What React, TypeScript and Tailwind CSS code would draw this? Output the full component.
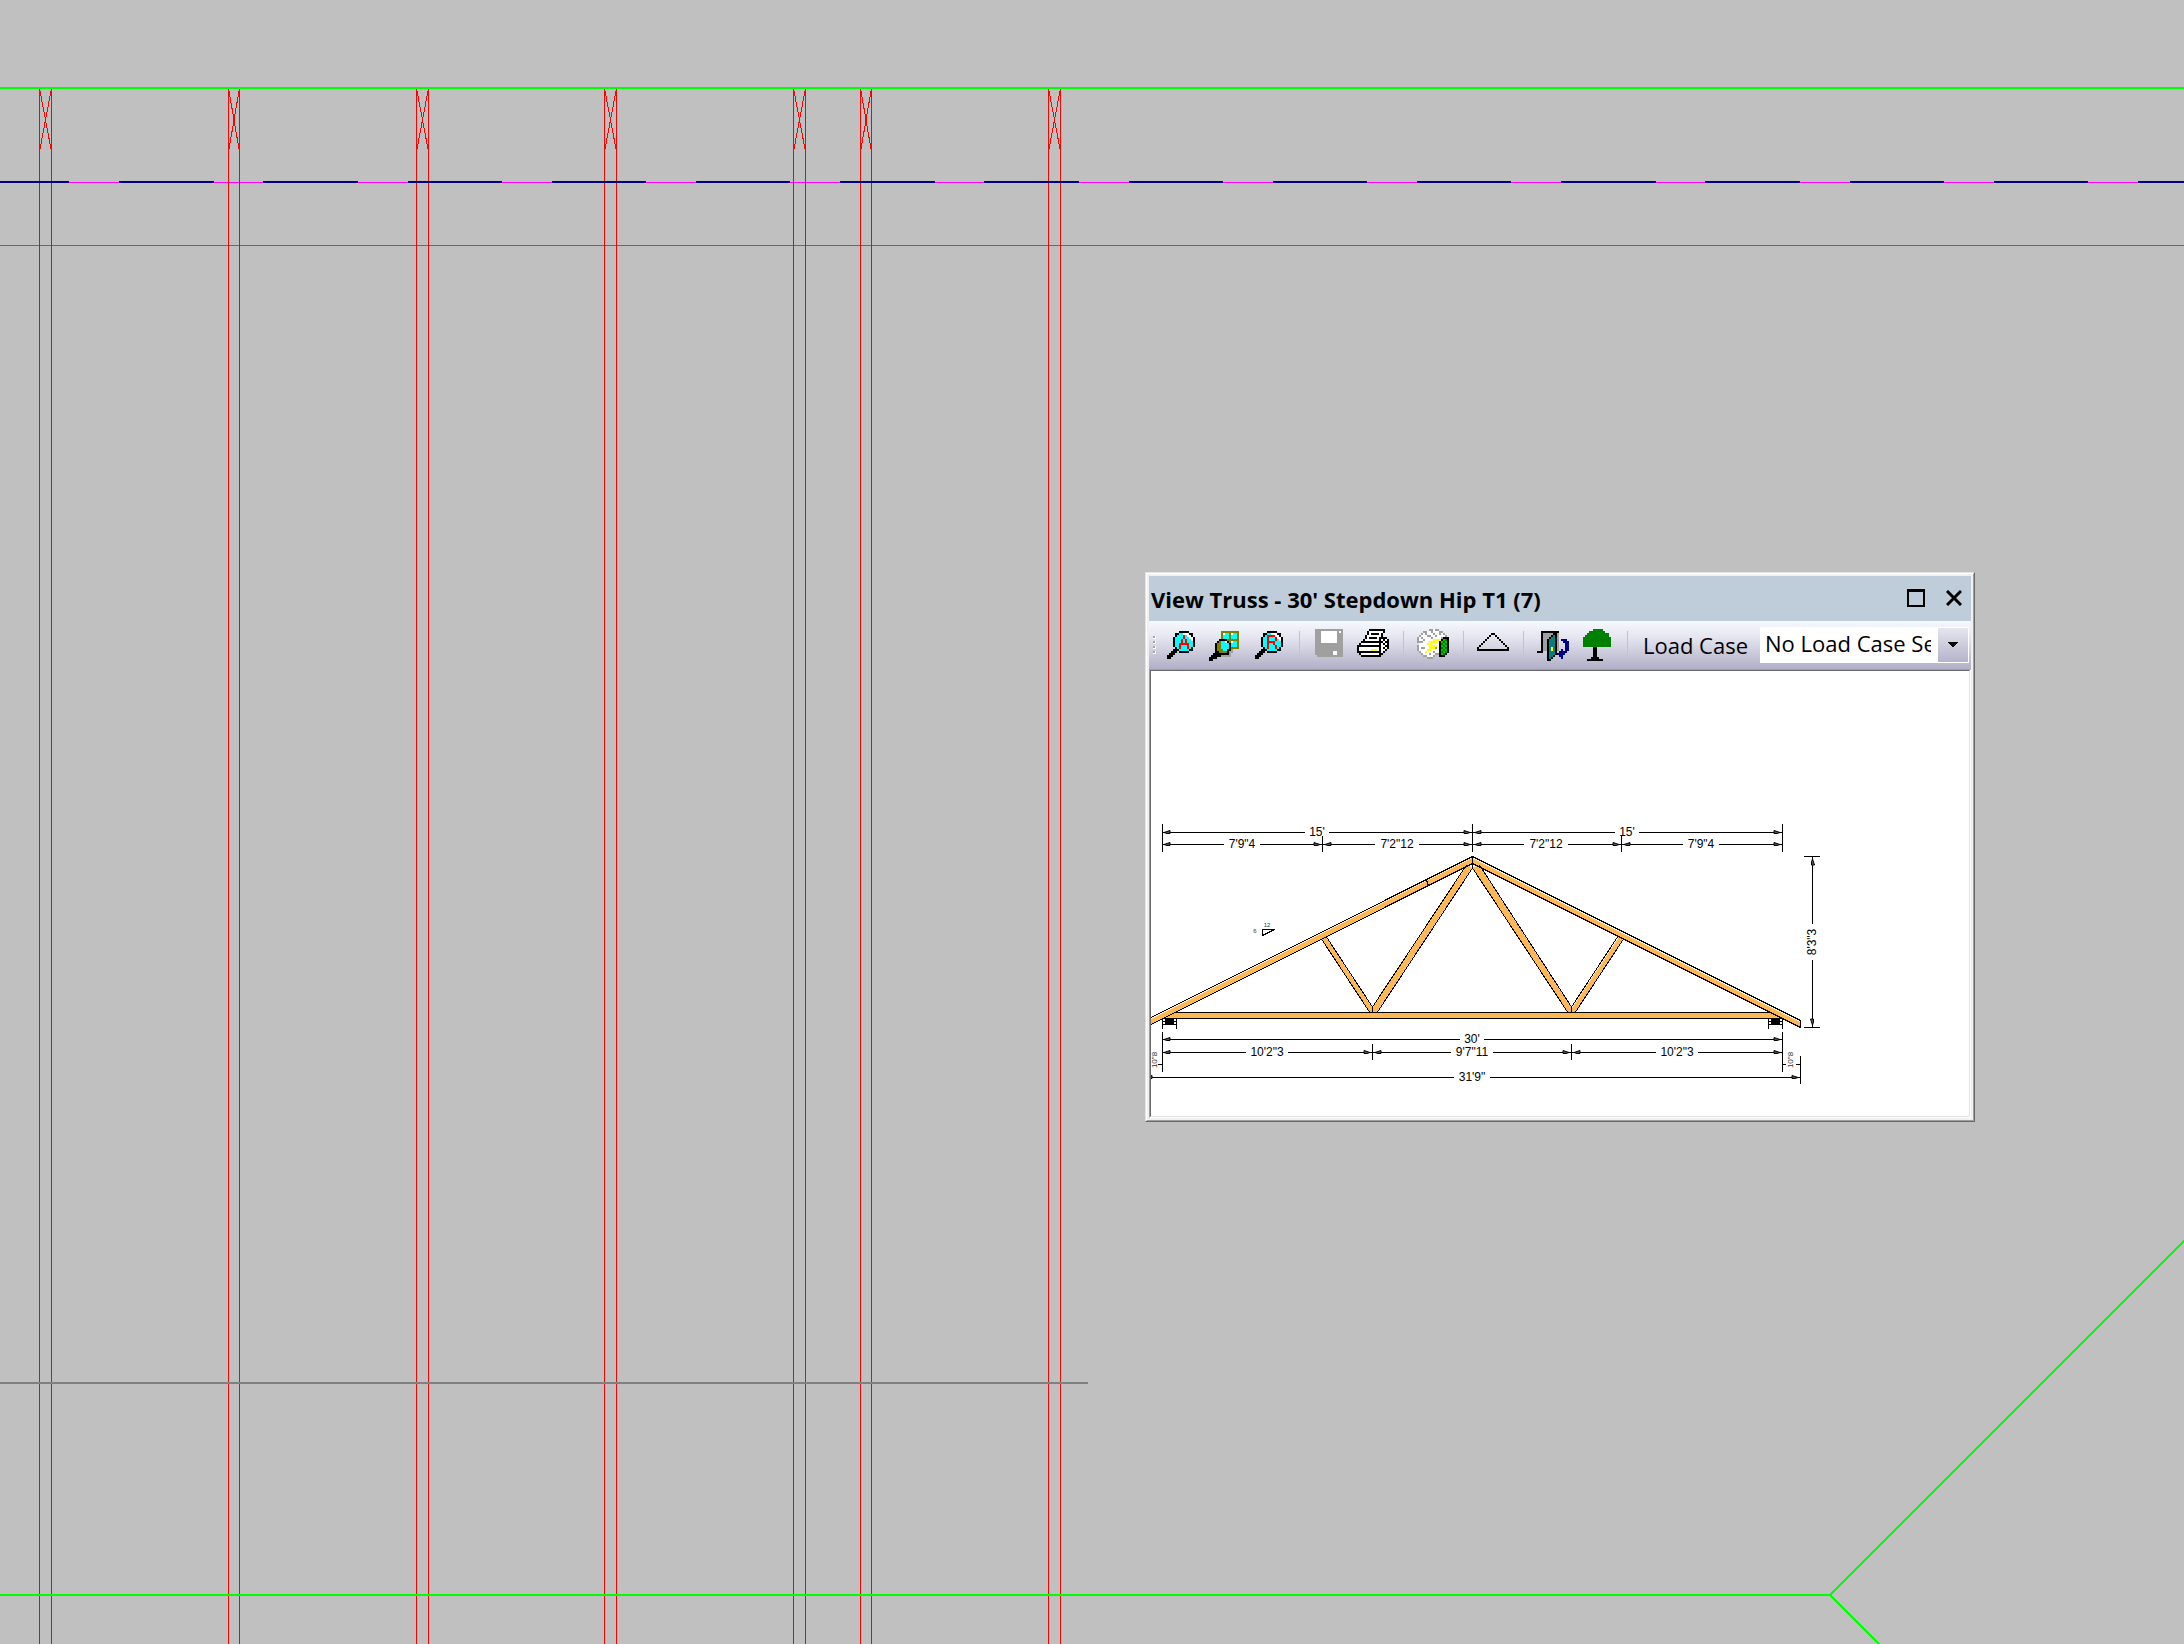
import { Fragment } from "react";

const palette: Record<string, string> = {
  "#": "#000000",
  w: "#ffffff",
  c: "#00ffff",
  r: "#ff0000",
  o: "#808000",
  g: "#a0a0a0",
  y: "#ffff00",
  G: "#008000",
  L: "#00c000",
  t: "#008080",
  n: "#000080",
};

const zoomAll = [
  "......#####...",
  "....##ccwww##.",
  "....#cccrcww#.",
  "...#ccccrccww#",
  "...#cccrcrccw#",
  "...#cccrcrccc#",
  "...#ccrrrrrcc#",
  "...#ccrcccrcc#",
  "....#crcccrc#.",
  "...###ccccc##.",
  "..###.#####...",
  ".###..........",
  "###...........",
  "##............",
];

const zoomWindow = [
  "......ooooooooo",
  "......owccowcco",
  "......occcoccco",
  "......occcoccco",
  ".....####oooooo",
  "....#occw#owcco",
  "...#oocccc#ccco",
  "...#oocccc#ccco",
  "...#oocccc#oooo",
  "...#ooocc##g...",
  "...##oooo#gg...",
  "..########g....",
  ".#####ggggg....",
  "####...........",
  "##.............",
];

const zoomRestore = [
  "......#####...",
  "....##ccwww##.",
  "....#crrrrww#.",
  "...#ccrcccrww#",
  "...#ccrcccrcw#",
  "...#ccrrrrccc#",
  "...#ccrccrccc#",
  "...#ccrcccrcc#",
  "....#crcccrc#.",
  "...###ccccc##.",
  "..###.#####...",
  ".###..........",
  "###...........",
  "##............",
];

const save = [
  "gggggggggggggg",
  "gggwwwwwwwwgwg",
  "gggwwwwwwwwggg",
  "gggwwwwwwwwggg",
  "gggwwwwwwwwggg",
  "gggwwwwwwwwggg",
  "gggwwwwwwwwggg",
  "gggggggggggggg",
  "gggggggggggggg",
  "gggggggggggggg",
  "gggggggggggggg",
  "gggggggggwwggg",
  "gggggggggwwggg",
  ".ggggggggggggg",
];

const print = [
  "......########..",
  ".....#wwwwwww#..",
  ".....#w####w#...",
  "....#wwwwwww#...",
  "....#w####w####.",
  "...#wwwwwww#w#w#",
  "..###########w##",
  ".#wwwwwwwww#w#w#",
  "############ww##",
  "#wwwwwwwwww#w#w#",
  "#wwwwwwyyyw#ww#.",
  "############w#..",
  ".#wwwwwwwww##...",
  "..##########....",
];

const analyze = [
  "......ggwgg.....",
  "...ggwwgwwwgg...",
  "..gwgwwwgwwgwg..",
  ".gwwwggwwgwwwwg.",
  "gwgwwwwgwwwwg###",
  "gwwgwwwwyyyy#LG#",
  "gggwwwyyyyw#LGL#",
  ".wwwwyywwww#GLG#",
  "gwwwwwyyyyw#LGL#",
  "gwggwwyyygw#GLG#",
  "gwwwwyywwww#LGL#",
  ".gwwywwwgww#GLG#",
  "..gwwwgwwgg#LG#.",
  "...ggwwwg..###..",
  ".....ggg........",
];

const pitch = [
  ".......##.......",
  "......#..#......",
  ".....#....#.....",
  "....#......#....",
  "...#........#...",
  "..#..........#..",
  ".#............#.",
  "#..............#",
  "################",
];

const exit = [
  "..#########.....",
  "..#ggggg##g.....",
  "..#gggg#t#g.....",
  "..#ggg#tt#g.....",
  "..#gg#ttt#g.nnn.",
  "..#gg#ttt#g..nnn",
  "..#gg#ttt#g...nn",
  "..#gg#ttt#g...nn",
  "..#gg#tyt#g...nn",
  "..#gg#tyt#g.n.nn",
  "###..#ttt#.nnnn.",
  ".....#ttt#nnnn..",
  ".....#tt#..nn...",
  ".....#t#....n...",
  ".....##.........",
];

const tree = [
  ".....GGGGG....",
  "...GGGGGGGG...",
  "..GGGGGGGGGGG.",
  ".GGGGGGGGGGGG.",
  "GGGGGGGGGGGGGG",
  "GGGGGGGGGGGGGG",
  "GGGGGGGGGGGGGG",
  "GGGGGGGGGGGGGG",
  "GGGGGGGGGGGGGG",
  ".....##.......",
  ".....##.......",
  ".....##.......",
  ".....##.......",
  ".....##.......",
  "....####......",
  "..########....",
];

interface SpriteProps {
  rows: string[];
  x?: number;
  y?: number;
}

// 16x16 toolbar bitmap, one rect per coloured cell
function Sprite({ rows, x = 0, y = 0 }: SpriteProps) {
  return (
    <svg viewBox="0 0 16 16" className="w-8 h-8" shapeRendering="crispEdges" aria-hidden="true">
      {rows.map((row, r) =>
        row.split("").map((cell, c) =>
          cell === "." ? null : (
            <rect key={`${r}-${c}`} x={x + c} y={y + r} width="1" height="1" fill={palette[cell]} />
          ),
        ),
      )}
    </svg>
  );
}

const toolGroups = [
  [
    { label: "Zoom all", rows: zoomAll, x: 1, y: 1 },
    { label: "Zoom window", rows: zoomWindow, x: 0, y: 1 },
    { label: "Zoom restore", rows: zoomRestore, x: 1, y: 1 },
  ],
  [
    { label: "Save", rows: save, x: 1, y: 0 },
    { label: "Print", rows: print, x: 0, y: 0 },
  ],
  [{ label: "Analyze", rows: analyze, x: 0, y: 0 }],
  [{ label: "Truss", rows: pitch, x: 0, y: 2 }],
  [
    { label: "Exit", rows: exit, x: 0, y: 1 },
    { label: "Tree", rows: tree, x: 1, y: 0 },
  ],
];

function Toolbar() {
  return (
    <div className="flex items-center h-12 pl-1 bg-linear-to-b from-[#f6f9fe] via-[#e4e5ef] via-35% to-[#b1afc7]">
      <div className="flex flex-col gap-0.5 w-1.5">
        {[0, 1, 2, 3].map((dot) => (
          <span key={dot} className="w-[3px] h-[3px] bg-[#a5a5ad] border-r border-b border-white" />
        ))}
      </div>
      {toolGroups.map((group, i) => (
        <Fragment key={i}>
          {group.map((tool) => (
            <button key={tool.label} aria-label={tool.label} className="flex items-center justify-center w-11 h-11 shrink-0">
              <Sprite rows={tool.rows} x={tool.x} y={tool.y} />
            </button>
          ))}
          <div className="flex justify-center w-4 h-11 pt-2 shrink-0">
            <span className="w-px h-6 bg-[#c4c4c8]" />
          </div>
        </Fragment>
      ))}
      <label htmlFor="load-case" className="pl-2 text-[22px] leading-8 whitespace-nowrap">
        Load Case
      </label>
      <div className="relative flex-1 ml-3 mr-0.5 h-9">
        <select
          id="load-case"
          className="w-full h-9 pl-[5px] pr-[38px] pb-1 bg-white text-[22px] leading-8 appearance-none rounded-none outline-none"
        >
          <option>No Load Case Selected</option>
        </select>
        <span className="absolute right-px top-px bottom-px flex items-center justify-center w-[30px] bg-linear-to-b from-[#e6e6f0] to-[#b5b3ca] pointer-events-none">
          <svg viewBox="0 0 10 6" className="w-2.5 h-1.5" shapeRendering="crispEdges">
            <path d="M0 0H10L5 6Z" />
          </svg>
        </span>
      </div>
    </div>
  );
}

interface SpanProps {
  from: number;
  to: number;
  y: number;
  mid: number;
  half: number;
  text: string;
}

const spans: SpanProps[] = [
  { from: 11, to: 321, y: 161, mid: 166, half: 12, text: "15'" },
  { from: 322, to: 631, y: 161, mid: 476, half: 12, text: "15'" },
  { from: 11, to: 171, y: 173, mid: 91, half: 18, text: "7'9\"4" },
  { from: 172, to: 321, y: 173, mid: 246, half: 22, text: "7'2\"12" },
  { from: 322, to: 470, y: 173, mid: 395, half: 22, text: "7'2\"12" },
  { from: 471, to: 631, y: 173, mid: 550, half: 18, text: "7'9\"4" },
  { from: 11, to: 631, y: 368, mid: 321, half: 12, text: "30'" },
  { from: 11, to: 221, y: 381, mid: 116, half: 21, text: "10'2\"3" },
  { from: 222, to: 420, y: 381, mid: 321, half: 21, text: "9'7\"11" },
  { from: 421, to: 631, y: 381, mid: 526, half: 21, text: "10'2\"3" },
  { from: -7, to: 649, y: 406, mid: 321, half: 18, text: "31'9\"" },
];

const arrow = "M2 0L8 -2V1H5Z";

function Span({ from, to, y, mid, half, text }: SpanProps) {
  return (
    <g>
      <path
        d={`M${from} ${y + 0.5}H${mid - half}M${mid + half} ${y + 0.5}H${to}`}
        stroke="black"
        shapeRendering="crispEdges"
      />
      <path d={arrow} transform={`translate(${from} ${y + 0.5})`} fill="#555" stroke="black" />
      <path d={arrow} transform={`translate(${to} ${y + 0.5}) scale(-1 1)`} fill="#555" stroke="black" />
      <text x={mid} y={y + 4} fontSize="12" textAnchor="middle">
        {text}
      </text>
    </g>
  );
}

function Bearing({ x }: { x: number }) {
  return (
    <g shapeRendering="crispEdges">
      <path d={`M${x + 0.5} 347V358M${x + 14.5} 347V358M${x} 350.5H${x + 14}M${x} 353.5H${x + 14}`} stroke="black" />
      <rect x={x + 3} y="348" width="9" height="6" />
    </g>
  );
}

function TrussDrawing() {
  return (
    <svg viewBox="0 0 818 445" className="block w-full bg-white font-['Liberation_Sans',sans-serif]">
      {/* timber */}
      <g fill="#fdb853">
        <path d="M-6 351L321 187V193L-6 357Z" />
        <path d="M321 187L649 351V357L321 193Z" />
        <path d="M22 342H620L631 347H11Z" />
        <path d="M170 268L175 266L221 336V341H218Z" />
        <path d="M316 194L321 197L226 341H222V336Z" />
        <path d="M321 197L328 194L420 336V341H416Z" />
        <path d="M468 266L472 268L425 341H421V337Z" />
      </g>
      <g stroke="black" fill="none" shapeRendering="crispEdges">
        <path d="M-6 349.5L321.5 185.5L649.5 349.5V356.5L321.5 192.5L-6 356.5" />
        <path d="M24 341.5H620M11 347.5H631" />
        <path d="M170.5 268L218.5 341M175.5 266L221.5 336" />
        <path d="M315.5 194L221.5 336M321.5 197L226.5 341" />
        <path d="M321.5 197L416.5 341M328.5 194L420.5 336" />
        <path d="M466.5 266L420.5 336M472.5 268L424.5 341" />
        <path d="M221.5 336V341M420.5 336V341M321.5 185V198M275.5 209L277.5 215" />
        <path d="M111.5 258.5H123.5L111.5 264.5Z" />
      </g>
      <Bearing x={11} />
      <Bearing x={617} />

      {/* dimensions */}
      <path
        d="M11.5 153V181M321.5 153V181M631.5 153V181M171.5 165V181M470.5 165V181
           M11.5 361V401M631.5 361V401M221.5 373V389M420.5 373V389M649.5 385V413
           M7 393.5H11M632 393.5H635M645 393.5H649
           M653 185.5H669M653 356.5H669M661.5 186V253M661.5 289V356"
        stroke="black"
        shapeRendering="crispEdges"
      />
      {spans.map((span, i) => (
        <Span key={i} {...span} />
      ))}
      <path d={arrow} transform="translate(661.5 186) rotate(90)" fill="#555" stroke="black" />
      <path d={arrow} transform="translate(661.5 356) rotate(-90)" fill="#555" stroke="black" />
      <text transform="translate(665 271) rotate(-90)" fontSize="12" textAnchor="middle">
        8'3"3
      </text>
      <g fill="#333" fontSize="8" textAnchor="middle">
        <text transform="translate(642 389) rotate(-90)">10"8</text>
        <text transform="translate(6 389) rotate(-90)">10"8</text>
      </g>
      <g fill="#333" fontSize="6" textAnchor="middle">
        <text x="116" y="256">12</text>
        <text x="104" y="262">6</text>
      </g>
    </svg>
  );
}

function TrussWindow() {
  return (
    <section className="absolute left-[1145px] top-[572px] w-[830px] border border-t-[#e3e3e3] border-l-[#e3e3e3] border-r-[#696969] border-b-[#696969]">
      <div className="border border-t-white border-l-white border-r-[#a0a0a0] border-b-[#a0a0a0]">
        <div className="border-2 border-[#f0f0f0]">
          <header className="flex items-start h-[45px] pt-[7px] pl-0.5 pr-px bg-[#bfcddb]">
            <h1 className="flex-1 text-[22px] leading-8 font-bold whitespace-nowrap">View Truss - 30' Stepdown Hip T1 (7)</h1>
            <button aria-label="Maximize" className="flex items-center justify-center w-8 h-[30px]">
              <span className="w-[18px] h-[18px] border-2 border-t-[3px] border-black" />
            </button>
            <button aria-label="Close" className="flex items-center justify-center w-8 h-[30px] ml-1.5">
              <svg viewBox="0 0 16 16" className="w-4 h-4">
                <path d="M1 1L15 15M15 1L1 15" stroke="black" strokeWidth="3" />
              </svg>
            </button>
          </header>
          <Toolbar />
          <div className="border border-t-[#a0a0a0] border-l-[#a0a0a0] border-r-white border-b-white">
            <div className="border border-t-[#696969] border-l-[#696969] border-r-[#e3e3e3] border-b-[#e3e3e3]">
              <TrussDrawing />
            </div>
          </div>
        </div>
      </div>
    </section>
  );
}

const trusses = [
  [39, 51],
  [228, 239],
  [416, 428],
  [604, 616],
  [793, 805],
  [860, 871],
  [1048, 1060],
];

// Plan view behind the floating window
function LayoutPlan() {
  return (
    <svg className="absolute inset-0 w-full h-full" shapeRendering="crispEdges">
      <line x1="0" y1="182.5" x2="100%" y2="182.5" stroke="#ff00ff" />
      <line x1="0" y1="245.5" x2="100%" y2="245.5" stroke="#ff00ff" />
      {trusses.map(([a, b]) => (
        <g key={a} stroke="#ff0000">
          <line x1={a + 0.5} y1="89" x2={a + 0.5} y2="100%" />
          <line x1={b + 0.5} y1="89" x2={b + 0.5} y2="100%" />
          <path d={`M${a + 1} 91L${b} 149M${b} 91L${a + 1} 149`} />
        </g>
      ))}
      <line x1="0" y1="1383" x2="1088" y2="1383" stroke="#808080" strokeWidth="2" />
      <line x1="-25" y1="182" x2="100%" y2="182" stroke="#000080" strokeWidth="2" strokeDasharray="94.3 49.9" />
      <g stroke="#00ff00" strokeWidth="2" fill="none">
        <line x1="0" y1="88" x2="100%" y2="88" />
        <path d="M0 1595H1830L3830 -405M1830 1595L3830 3595" />
      </g>
    </svg>
  );
}

export default function App() {
  return (
    <main className="relative min-h-screen overflow-hidden bg-[#c0c0c0] text-black font-['Open_Sans','Noto_Sans',sans-serif]">
      <LayoutPlan />
      <TrussWindow />
    </main>
  );
}
